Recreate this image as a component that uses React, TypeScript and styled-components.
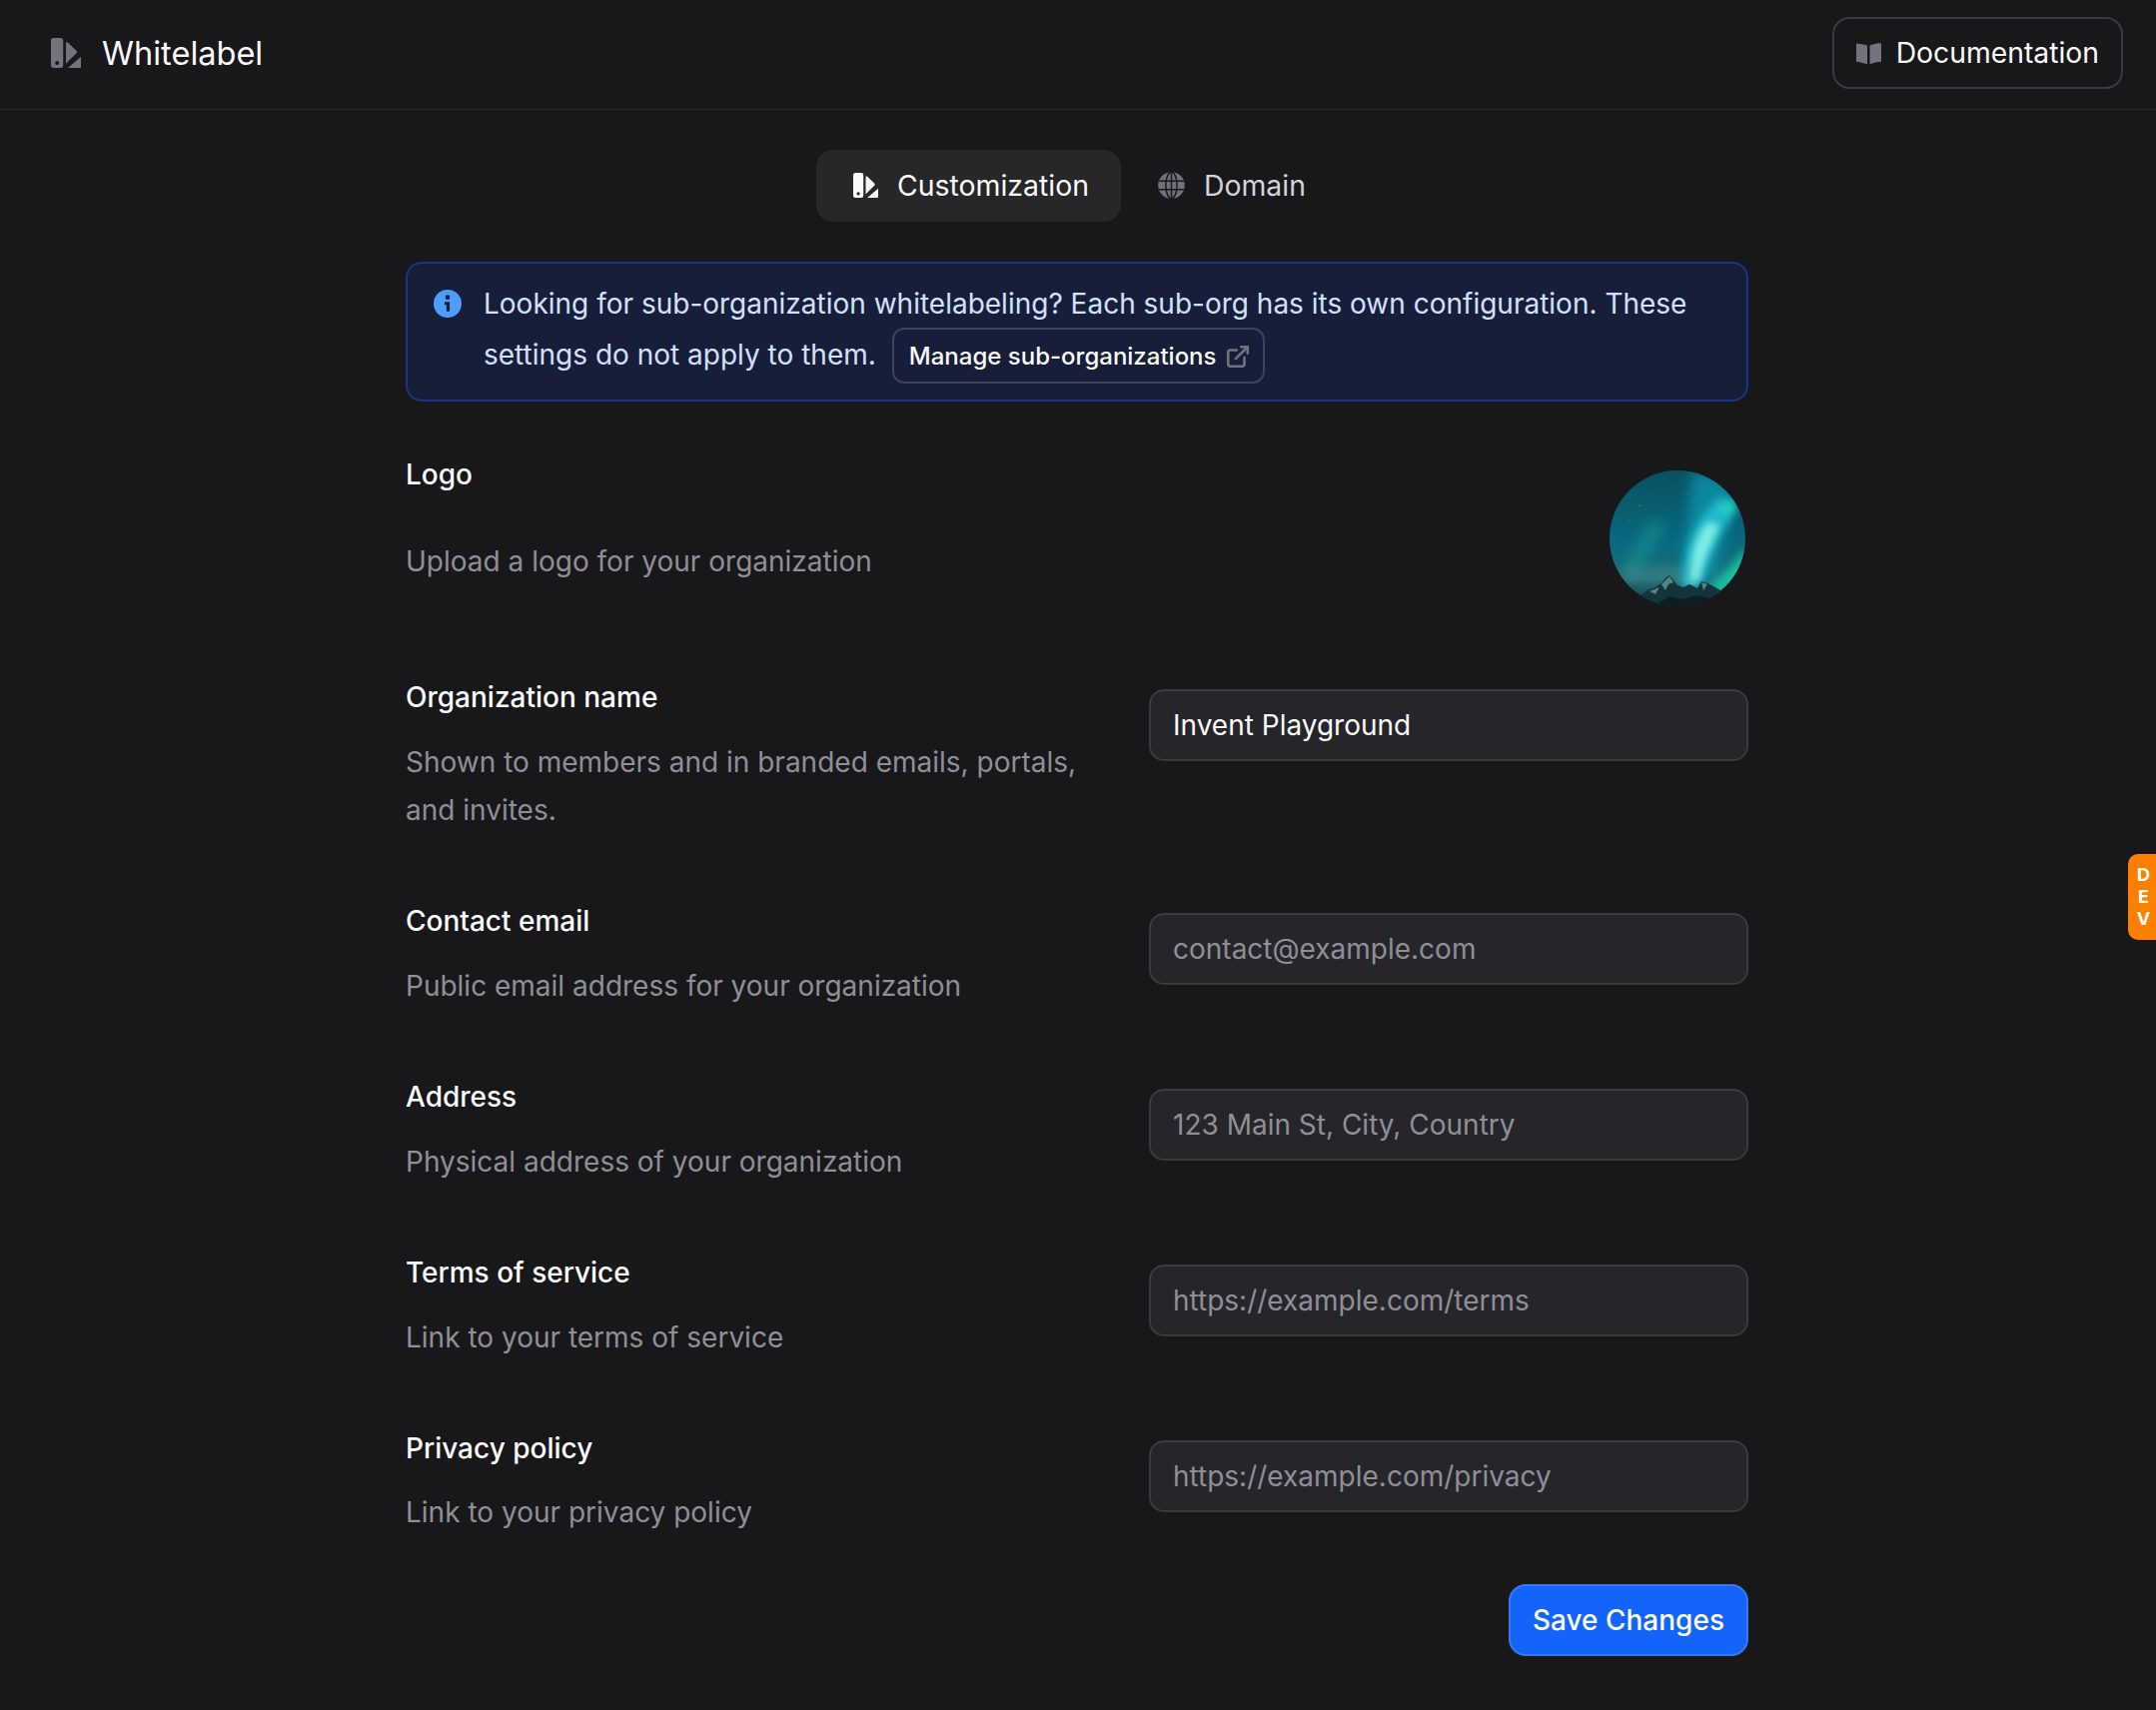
import { ExternalLink } from "lucide-react"
import styled, { createGlobalStyle } from "styled-components"

const GlobalStyle = createGlobalStyle`
  html, body {
    margin: 0;
    background: #18181b;
    font-family: Inter, "Liberation Sans", sans-serif;
    color: #fafafa;
  }
  * {
    box-sizing: border-box;
  }
`

const Page = styled.div`
  position: relative;
  min-height: 1712px;
  background: #18181b;
`

const Header = styled.header`
  height: 110px;
  display: flex;
  align-items: center;
  justify-content: space-between;
  padding: 0 33px 3px 51px;
  border-bottom: 1px solid #2a2a2e;
`

const Brand = styled.div`
  display: flex;
  align-items: center;
  gap: 21px;
  font-size: 32.5px;
  font-weight: 400;
`

const DocsButton = styled.button`
  height: 72px;
  display: flex;
  align-items: center;
  gap: 15px;
  padding: 0 22px;
  background: transparent;
  border: 2px solid #3a3a3f;
  border-radius: 17px;
  color: #fafafa;
  font: 400 28.3px Inter, sans-serif;
`

const Main = styled.main`
  width: 1344px;
  margin-left: 406px;
  padding-top: 40px;
`

const Tabs = styled.nav`
  display: flex;
  justify-content: center;
  margin-bottom: 40px;
`

const Tab = styled.div<{ $active?: boolean }>`
  height: 72px;
  display: flex;
  align-items: center;
  gap: 19px;
  padding: 0 32px 1px 37px;
  border-radius: 17px;
  background: ${(p) => (p.$active ? "#27272a" : "transparent")};
  color: ${(p) => (p.$active ? "#fafafa" : "#d4d4d8")};
  font-size: 28.4px;
`

const Alert = styled.div`
  display: flex;
  gap: 22px;
  padding: 15px 26px 0;
  height: 140px;
  background: #171e3a;
  border: 2px solid #1e3480;
  border-radius: 16px;
  margin-bottom: 54px;
  color: #d3e1fb;
  font-size: 28px;
  line-height: 51px;
`

const AlertIcon = styled.svg`
  flex: none;
  width: 28px;
  height: 28px;
  margin-top: 11px;
`

const AlertLink = styled.span`
  display: inline-flex;
  align-items: center;
  gap: 9px;
  height: 56px;
  margin: -8px 0 -8px 16px;
  padding: 2px 12px 0 15px;
  border: 2px solid #3e4358;
  border-radius: 12px;
  color: #fafafa;
  font-size: 24px;
  font-weight: 500;
  line-height: 1;
`

const Row = styled.section<{ $gap?: number }>`
  display: flex;
  justify-content: space-between;
  align-items: flex-start;
  margin-bottom: ${(p) => p.$gap ?? 67.6}px;
`

const Info = styled.div`
  width: 680px;
`

const Title = styled.div`
  font-size: 28px;
  font-weight: 500;
  line-height: 38px;
`

const Description = styled.p<{ $top?: number }>`
  margin: ${(p) => p.$top ?? 21.7}px 0 0;
  color: #8f8f98;
  font-size: 28px;
  line-height: 48.5px;
`

const Input = styled.input`
  width: 600px;
  height: 72px;
  margin-top: 11px;
  padding: 0 22px;
  background: #26262a;
  border: 2px solid #3a3a3f;
  border-radius: 15px;
  color: #fafafa;
  font: 400 28px Inter, sans-serif;
  outline: none;

  &::placeholder {
    color: #8f8f98;
    opacity: 1;
  }
`

const Avatar = styled.svg`
  width: 136px;
  height: 136px;
  margin: 15px 3px 5px 0;
`

const Footer = styled.div`
  display: flex;
  justify-content: flex-end;
  margin-top: -20px;
`

const SaveButton = styled.button`
  height: 72px;
  padding: 0 22px;
  background: #1463fb;
  border: 2px solid #3a77f5;
  border-radius: 17px;
  color: #fff;
  font: 500 28px Inter, sans-serif;
`

const DevTab = styled.div`
  position: absolute;
  top: 855px;
  right: 0;
  width: 28px;
  height: 86px;
  display: flex;
  flex-direction: column;
  align-items: center;
  justify-content: center;
  padding-left: 3px;
  background: #ff8000;
  border-radius: 10px 0 0 10px;
  color: #fff;
  font-size: 18px;
  font-weight: 700;
  line-height: 22px;
`

function LogoMark({ color, size }: { color: string; size: number }) {
  return (
    <svg width={size} height={size} viewBox="0 0 24 24" fill={color}>
      <path
        fillRule="evenodd"
        d="M2.2 0h5.4a2.2 2.2 0 0 1 2.2 2.2v19.6a2.2 2.2 0 0 1-2.2 2.2H2.2A2.2 2.2 0 0 1 0 21.8V2.2A2.2 2.2 0 0 1 2.2 0Zm2.7 18.4a1.6 1.6 0 1 0 0 3.2 1.6 1.6 0 0 0 0-3.2Z"
      />
      <path d="M12 4.4c0-1 1-1.4 1.7-.7l6.8 6.7c.5.5.5 1.1.1 1.6L12 20.6V4.4Z" />
      <path d="M24 15v8a1 1 0 0 1-1 1H13.6L24 15Z" />
    </svg>
  )
}

function BookIcon() {
  return (
    <svg width="25" height="25" viewBox="0 0 24 24" fill="#73737d">
      <path d="M0 2.6c3.6 0 7 .5 10.6 1.8v18C7 21 3.6 20 0 19.8V2.6Z" />
      <path d="M24 2.2c-3.6 0-7 .6-11 2.2v18c4-1.6 7.4-2.4 11-2.6V2.2Z" />
    </svg>
  )
}

function GlobeIcon() {
  return (
    <svg width="27" height="27" viewBox="0 0 24 24" fill="none">
      <circle cx="12" cy="12" r="11.8" fill="#70707a" />
      <g stroke="#18181b" strokeWidth="1.3">
        <path d="M1 8.2h22M1 15.8h22M12 .2v23.6" />
        <ellipse cx="12" cy="12" rx="5" ry="11.8" />
      </g>
    </svg>
  )
}

function AuroraLogo() {
  return (
    <Avatar viewBox="0 0 136 136">
      <defs>
        <clipPath id="round">
          <circle cx="68" cy="68" r="68" />
        </clipPath>
        <linearGradient id="sky" x1="0" y1="0" x2="0" y2="1">
          <stop offset="0" stopColor="#08515f" />
          <stop offset="0.55" stopColor="#0a6a80" />
          <stop offset="0.8" stopColor="#226d76" />
          <stop offset="1" stopColor="#14383e" />
        </linearGradient>
        <filter id="wide" x="-50%" y="-50%" width="200%" height="200%">
          <feGaussianBlur stdDeviation="7" />
        </filter>
        <filter id="mid" x="-50%" y="-50%" width="200%" height="200%">
          <feGaussianBlur stdDeviation="4" />
        </filter>
        <filter id="tight" x="-50%" y="-50%" width="200%" height="200%">
          <feGaussianBlur stdDeviation="3.5" />
        </filter>
      </defs>
      <g clipPath="url(#round)">
        <rect width="136" height="136" fill="url(#sky)" />
        <path d="M40 50 C34 66 22 84 12 104 L28 104 C36 88 48 70 56 52 Z" fill="#1c9d94" opacity="0.55" filter="url(#wide)" />
        <path d="M82 0 C82 30 76 60 72 118 L108 106 C108 70 122 46 132 24 C120 10 104 0 82 0 Z" fill="#0f9cb4" opacity="0.7" filter="url(#wide)" />
        <path d="M98 116 C112 108 126 92 136 76 L136 104 L112 128 Z" fill="#17d0a6" opacity="0.85" filter="url(#mid)" />
        <path d="M110 26 C100 38 88 50 82 66 C76 84 74 100 72 118 L90 118 C94 100 100 88 106 74 C112 60 122 48 128 36 Z" fill="#26c4d2" opacity="0.85" filter="url(#mid)" />
        <path d="M120 28 L126 36 L116 46 L110 40 Z" fill="#22d8b0" opacity="0.75" filter="url(#tight)" />
        <path d="M98 52 C90 62 84 74 82 92 C81 100 80 106 79 112 L90 110 C92 98 96 88 100 78 C104 70 108 60 110 54 Z" fill="#8ff5ea" opacity="0.85" filter="url(#tight)" />
        <rect x="14" y="96" width="66" height="16" fill="#5c9a98" opacity="0.3" filter="url(#mid)" />
        <g fill="#cdf3ee" opacity="0.6">
          <circle cx="30" cy="35" r="0.5" />
          <circle cx="42" cy="22" r="0.4" />
          <circle cx="64" cy="14" r="0.4" />
          <circle cx="20" cy="50" r="0.4" />
          <circle cx="56" cy="40" r="0.4" />
          <circle cx="78" cy="24" r="0.4" />
        </g>
        <path
          d="M30 126 L38 120 L46 117 L52 113 L56 108 L60 105 L64 110 L68 115 L74 117 L80 114 L88 118 L92 111 L98 113 L106 117 L114 122 L136 136 L0 136 Z"
          fill="#12343a"
        />
        <path d="M52 114 L60 106 L64 112 L59 114 L56 120 Z M40 121 L50 117 L46 124 Z M92 112 L98 114 L94 120 Z" fill="#5a9494" opacity="0.85" />
        <path d="M44 136 L60 126 L72 129 L88 125 L100 128 L92 136 Z" fill="#0c1e22" />
      </g>
    </Avatar>
  )
}

const rows = [
  {
    title: "Contact email",
    description: "Public email address for your organization",
    placeholder: "contact@example.com",
  },
  {
    title: "Address",
    description: "Physical address of your organization",
    placeholder: "123 Main St, City, Country",
  },
  {
    title: "Terms of service",
    description: "Link to your terms of service",
    placeholder: "https://example.com/terms",
  },
  {
    title: "Privacy policy",
    description: "Link to your privacy policy",
    placeholder: "https://example.com/privacy",
  },
]

export default function App() {
  return (
    <Page>
      <GlobalStyle />
      <Header>
        <Brand>
          <LogoMark color="#73737d" size={30} />
          Whitelabel
        </Brand>
        <DocsButton>
          <BookIcon />
          Documentation
        </DocsButton>
      </Header>

      <Main>
        <Tabs>
          <Tab $active>
            <LogoMark color="#fafafa" size={25} />
            Customization
          </Tab>
          <Tab>
            <GlobeIcon />
            Domain
          </Tab>
        </Tabs>

        <Alert>
          <AlertIcon viewBox="0 0 24 24">
            <circle cx="12" cy="12" r="12" fill="#4f9cff" />
            <circle cx="12" cy="6.6" r="2" fill="#171e3a" />
            <path d="M9.4 10.6h4.4v8h-2.8v-5.6H9.4z" fill="#171e3a" />
          </AlertIcon>
          <div>
            Looking for sub-organization whitelabeling? Each sub-org has its own configuration. These
            <br />
            settings do not apply to them.
            <AlertLink>
              Manage sub-organizations
              <ExternalLink size={26} color="#73737d" strokeWidth={2.4} />
            </AlertLink>
          </div>
        </Alert>

        <Row $gap={67}>
          <Info>
            <Title>Logo</Title>
            <Description $top={44}>Upload a logo for your organization</Description>
          </Info>
          <AuroraLogo />
        </Row>

        <Row>
          <Info>
            <Title>Organization name</Title>
            <Description>Shown to members and in branded emails, portals, and invites.</Description>
          </Info>
          <Input defaultValue="Invent Playground" />
        </Row>

        {rows.map((row) => (
          <Row key={row.title}>
            <Info>
              <Title>{row.title}</Title>
              <Description>{row.description}</Description>
            </Info>
            <Input placeholder={row.placeholder} />
          </Row>
        ))}

        <Footer>
          <SaveButton>Save Changes</SaveButton>
        </Footer>
      </Main>

      <DevTab>
        <span>D</span>
        <span>E</span>
        <span>V</span>
      </DevTab>
    </Page>
  )
}
